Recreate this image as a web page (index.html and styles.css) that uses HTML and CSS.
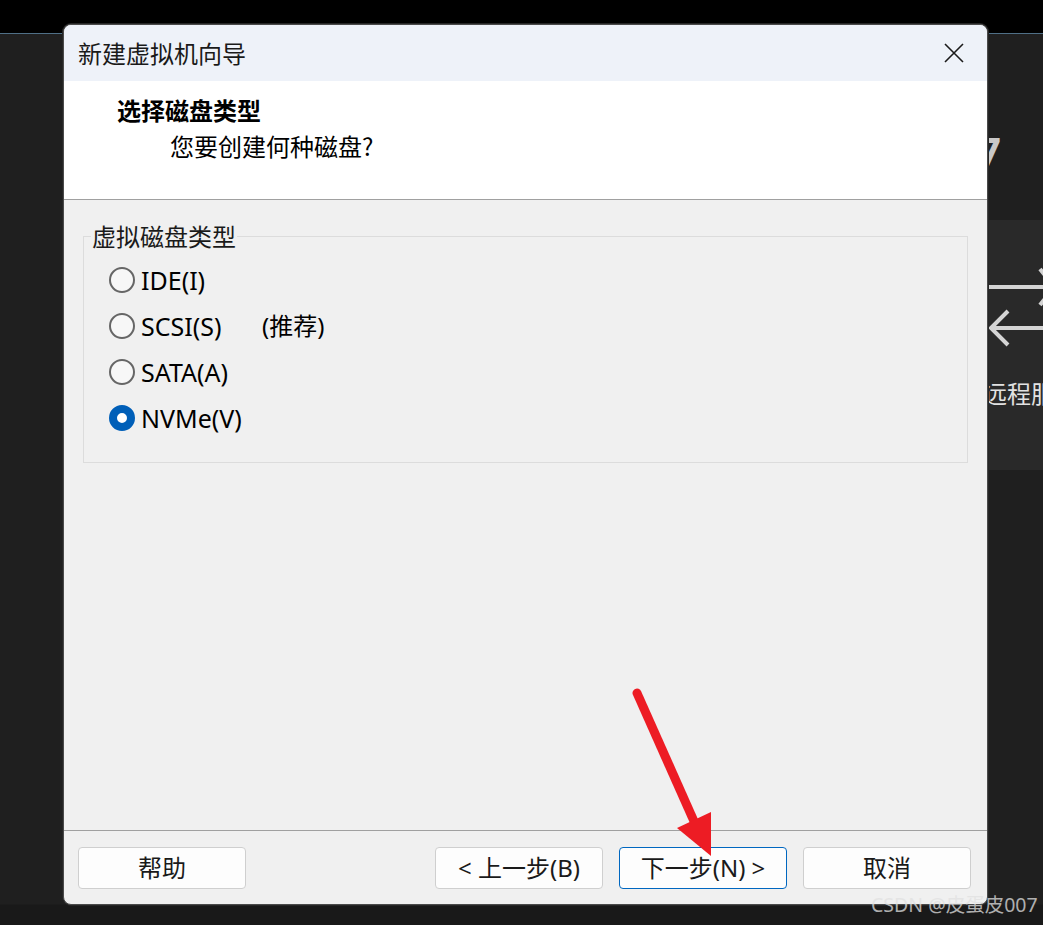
FILE: index.html
```html
<!DOCTYPE html>
<html lang="zh-CN">
<head>
<meta charset="utf-8">
<title>新建虚拟机向导</title>
<link rel="stylesheet" href="styles.css">
</head>
<body>
<div class="screen">
  <div class="topbar"></div>
  <div class="desktop">
    <div class="bg-seven">7</div>
    <div class="bg-panel">
      <svg class="bg-arrows" width="60" height="90" viewBox="0 0 60 90">
        <line x1="0" y1="22" x2="60" y2="22" stroke="#d4d4d4" stroke-width="4"/>
        <polyline points="52,4 66,22 52,40" fill="none" stroke="#d4d4d4" stroke-width="4"/>
        <line x1="2" y1="63" x2="60" y2="63" stroke="#d4d4d4" stroke-width="4"/>
        <polyline points="20,46 3,63 20,80" fill="none" stroke="#d4d4d4" stroke-width="4"/>
      </svg>
      <div class="bg-text">远程服</div>
    </div>

    <div class="dialog">
      <div class="titlebar">
        <span class="title">新建虚拟机向导</span>
        <svg class="close" width="20" height="20" viewBox="0 0 20 20">
          <path d="M1 1 L19 19 M19 1 L1 19" stroke="#1b1b1b" stroke-width="1.6" fill="none"/>
        </svg>
      </div>
      <div class="header">
        <div class="h-title">选择磁盘类型</div>
        <div class="h-sub">您要创建何种磁盘?</div>
      </div>
      <div class="body">
        <fieldset class="group">
          <legend>虚拟磁盘类型</legend>
          <div class="radio-row"><span class="radio"></span><span class="label">IDE(I)</span></div>
          <div class="radio-row"><span class="radio"></span><span class="label label-fixed">SCSI(S)</span><span class="label cjk">(推荐)</span></div>
          <div class="radio-row"><span class="radio"></span><span class="label">SATA(A)</span></div>
          <div class="radio-row"><span class="radio checked"></span><span class="label">NVMe(V)</span></div>
        </fieldset>
      </div>
      <div class="footer">
        <button class="btn">帮助</button>
        <div class="spacer"></div>
        <button class="btn">&lt; 上一步(B)</button>
        <button class="btn primary">下一步(N) &gt;</button>
        <button class="btn">取消</button>
      </div>
    </div>

    <svg class="red-arrow" width="1043" height="925" viewBox="0 0 1043 925">
      <line x1="637" y1="693" x2="697" y2="828" stroke="#ed1c24" stroke-width="9" stroke-linecap="round"/>
      <polygon points="677,828 711,812 711,856" fill="#ed1c24"/>
    </svg>

    <div class="watermark">CSDN @皮蛋皮007</div>
  </div>
</div>
</body>
</html>
```

FILE: styles.css
```css
* { box-sizing: border-box; }
html, body { margin: 0; padding: 0; }
body {
  width: 1043px;
  height: 925px;
  overflow: hidden;
  background: #1f1f1f;
  font-family: "Noto Sans", "Noto Sans CJK SC", sans-serif;
  color: #000;
}
.screen {
  position: relative;
  width: 1043px;
  height: 925px;
  display: flex;
  flex-direction: column;
}
.topbar {
  height: 34px;
  background: #000;
  border-bottom: 1px solid #4f6f86;
  flex: none;
}
.desktop {
  flex: 1;
  background: linear-gradient(#1f1f1f 0, #1f1f1f 870px, #191919 871px);
}

/* background canvas items */
.bg-seven {
  position: absolute;
  left: 978px;
  top: 131px;
  font-family: "Noto Sans", sans-serif;
  font-weight: 700;
  font-size: 40px;
  line-height: 40px;
  color: #c8c8c8;
}
.bg-panel {
  position: absolute;
  left: 960px;
  top: 220px;
  width: 83px;
  height: 250px;
  background: #292929;
  overflow: hidden;
}
.bg-arrows {
  position: absolute;
  left: 28px;
  top: 45px;
}
.bg-text {
  position: absolute;
  left: 23px;
  top: 158px;
  font-family: "Noto Sans CJK SC", sans-serif;
  font-size: 24px;
  line-height: 30px;
  color: #e2e2e2;
  white-space: nowrap;
}

/* dialog window */
.dialog {
  position: absolute;
  left: 63px;
  top: 24px;
  width: 925px;
  height: 881px;
  border: 1px solid #4a4a4a;
  border-radius: 8px;
  background: #f0f0f0;
  overflow: hidden;
  display: flex;
  flex-direction: column;
  box-shadow: 0 0 0 1px #262626;
}
.titlebar {
  height: 56px;
  flex: none;
  background: #eef2f9;
  display: flex;
  align-items: center;
  padding-left: 14px;
  padding-right: 23px;
}
.title {
  flex: 1;
  font-family: "Noto Sans CJK SC", sans-serif;
  font-size: 24px;
  line-height: 30px;
  color: #1a1a1a;
}
.close { display: block; }

.header {
  height: 119px;
  flex: none;
  background: #fff;
  border-bottom: 1px solid #a0a0a0;
  padding-top: 13px;
  padding-left: 53px;
  font-family: "Noto Sans CJK SC", sans-serif;
}
.h-title {
  font-size: 24px;
  line-height: 32px;
  font-weight: 700;
  color: #000;
}
.h-sub {
  margin-top: 4px;
  padding-left: 53px;
  font-size: 24px;
  line-height: 32px;
  color: #000;
}

.body {
  flex: 1;
  padding: 24px 19px 0 19px;
}
.group {
  margin: 0;
  border: 1px solid #dcdcdc;
  padding: 9px 0 21px 0;
  min-width: 0;
}
.group legend {
  margin-left: 7px;
  padding: 0 1px;
  font-family: "Noto Sans CJK SC", sans-serif;
  font-size: 24px;
  line-height: 24px;
  color: #1a1a1a;
}
.radio-row {
  height: 46px;
  padding-left: 25px;
  display: flex;
  align-items: center;
}
.radio {
  width: 26px;
  height: 26px;
  border-radius: 50%;
  border: 2px solid #666;
  background: #f7f7f7;
  margin-right: 6px;
  flex: none;
}
.radio.checked {
  border: 8px solid #005fb8;
  background: #fff;
}
.label {
  font-family: "Noto Sans", "Noto Sans CJK SC", sans-serif;
  font-size: 25px;
  line-height: 30px;
  color: #000;
  white-space: nowrap;
}
.label.cjk { font-size: 24px; }
.label-fixed {
  display: inline-block;
  width: 121px;
}

.footer {
  height: 74px;
  flex: none;
  border-top: 1px solid #a0a0a0;
  padding: 16px 16px 0 14px;
  display: flex;
  align-items: flex-start;
  gap: 16px;
}
.spacer { flex: 1; }
.btn {
  width: 168px;
  height: 42px;
  border: 1px solid #cfcfcf;
  border-radius: 4px;
  background: #fdfdfd;
  font-family: "Noto Sans", "Noto Sans CJK SC", sans-serif;
  font-size: 24px;
  line-height: 30px;
  color: #1a1a1a;
  padding: 0;
}
.btn.primary {
  border-color: #0067c0;
}

.red-arrow {
  position: absolute;
  left: 0;
  top: 0;
  pointer-events: none;
}
.watermark {
  position: absolute;
  left: 871px;
  top: 892px;
  font-family: "Noto Sans", "Noto Sans CJK SC", sans-serif;
  font-size: 19.5px;
  line-height: 26px;
  color: rgba(225, 225, 225, 0.75);
  white-space: nowrap;
}
```
